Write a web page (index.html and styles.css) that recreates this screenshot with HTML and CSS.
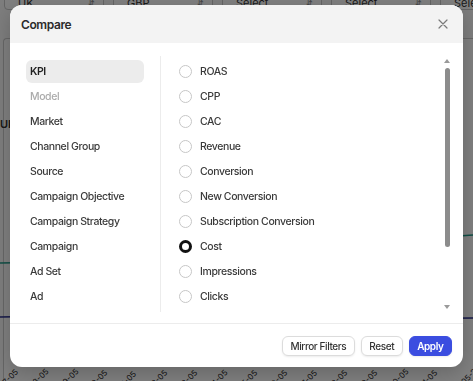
FILE: index.html
```html
<!DOCTYPE html>
<html lang="en">
<head>
  <meta charset="UTF-8" />
  <meta name="viewport" content="width=device-width, initial-scale=1.0" />
  <title>Compare</title>
  <link rel="stylesheet" href="styles.css">
</head>
<body>

  <!-- dashboard behind the dialog -->
  <div class="dash">
    <div class="filters">
      <div class="select">UK <span class="chev">&#8693;</span></div>
      <div class="select">GBP <span class="chev">&#8693;</span></div>
      <div class="select">Select <span class="chev">&#8693;</span></div>
      <div class="select">Select <span class="chev">&#8693;</span></div>
      <div class="select">Select <span class="chev">&#8693;</span></div>
    </div>

    <div class="card">
      <div class="card-label">UK</div>
      <svg class="chart" width="473" height="230" viewBox="0 0 473 230">
        <polyline points="0,132 120,130 240,124 360,112 473,104" fill="none" stroke="#1f9c8a" stroke-width="1.5" />
        <polyline points="0,186 120,184 240,186 360,188 473,187" fill="none" stroke="#2a2f8f" stroke-width="1.5" />
      </svg>
      <div class="axis">
        <span>07-05</span><span>08-05</span><span>09-05</span><span>10-05</span>
        <span>11-05</span><span>12-05</span><span>13-05</span><span>14-05</span>
        <span>15-05</span><span>16-05</span><span>17-05</span><span>18-05</span>
        <span>19-05</span><span>20-05</span><span>21-05</span><span>22-05-2024</span>
      </div>
    </div>
  </div>

  <div class="backdrop">
    <div class="modal">
      <div class="modal-head">
        <h2>Compare</h2>
        <button class="close" aria-label="Close">
          <svg width="10" height="10" viewBox="0 0 10 10">
            <path d="M1 1 L9 9 M9 1 L1 9" stroke="#7a7a7a" stroke-width="1.2" stroke-linecap="round" />
          </svg>
        </button>
      </div>

      <div class="modal-body">
        <ul class="nav">
          <li class="active">KPI</li>
          <li class="disabled">Model</li>
          <li>Market</li>
          <li>Channel Group</li>
          <li>Source</li>
          <li>Campaign Objective</li>
          <li>Campaign Strategy</li>
          <li>Campaign</li>
          <li>Ad Set</li>
          <li>Ad</li>
        </ul>

        <div class="options">
          <ul class="option-list">
            <li><span class="radio"></span>ROAS</li>
            <li><span class="radio"></span>CPP</li>
            <li><span class="radio"></span>CAC</li>
            <li><span class="radio"></span>Revenue</li>
            <li><span class="radio"></span>Conversion</li>
            <li><span class="radio"></span>New Conversion</li>
            <li><span class="radio"></span>Subscription Conversion</li>
            <li><span class="radio checked"></span>Cost</li>
            <li><span class="radio"></span>Impressions</li>
            <li><span class="radio"></span>Clicks</li>
          </ul>
          <div class="scrollbar">
            <span class="arrow up"></span>
            <span class="thumb"></span>
            <span class="arrow down"></span>
          </div>
        </div>
      </div>

      <div class="modal-foot">
        <button class="btn">Mirror Filters</button>
        <button class="btn">Reset</button>
        <button class="btn primary">Apply</button>
      </div>
    </div>
  </div>

</body>
</html>
```

FILE: styles.css
```css
body {
  margin: 0;
  padding: 0;
  font-family: Inter, "Noto Sans", sans-serif;
  color: #333;
  overflow: hidden;
}

/* dashboard underneath */
.dash {
  height: 381px;
  background: #fafafa;
  overflow: hidden;
}

.filters {
  display: flex;
  gap: 9px;
  margin-top: -14px;
  padding-left: 4px;
}

.select {
  flex: 0 0 100px;
  height: 24px;
  box-sizing: border-box;
  border: 1px solid #c9c9c9;
  border-radius: 4px;
  background: #fff;
  padding: 10px 8px 0 13px;
  font-size: 11px;
  display: flex;
  justify-content: space-between;
  align-items: center;
  color: #333;
}

.chev {
  font-size: 8px;
  color: #888;
}

.card {
  margin: 28px 0 0 3px;
  border-left: 1px solid #ccc;
  border-top: 1px solid #ccc;
  border-radius: 4px 0 0 0;
  height: 360px;
  background: #fff;
}

.card-label {
  margin: 78px 0 0 -4px;
  font-size: 11px;
  font-weight: 600;
  height: 14px;
}

.chart {
  display: block;
  margin-left: -4px;
}

.axis {
  display: flex;
  margin: 0 0 0 -8px;
}

.axis span {
  flex: 0 0 30px;
  font-size: 8px;
  color: #222;
  transform: rotate(-45deg);
  white-space: nowrap;
  margin-top: 10px;
}

/* dialog */
.backdrop {
  position: fixed;
  top: 0;
  left: 0;
  right: 0;
  bottom: 0;
  background: rgba(0, 0, 0, 0.5);
  display: flex;
  justify-content: center;
  align-items: flex-start;
  padding-top: 5px;
}

.modal {
  width: 453px;
  background: #fff;
  border-radius: 12px;
  overflow: hidden;
  box-shadow: 0 6px 20px rgba(0, 0, 0, 0.2);
}

.modal-head {
  height: 38px;
  background: #f3f3f3;
  display: flex;
  justify-content: space-between;
  align-items: center;
  padding: 0 12px 0 11px;
}

.modal-head h2 {
  margin: 0;
  font-size: 12px;
  font-weight: 600;
  letter-spacing: -0.4px;
  color: #2b2b2b;
}

.close {
  border: none;
  background: none;
  padding: 0;
  width: 16px;
  height: 16px;
  display: flex;
  align-items: center;
  justify-content: center;
  cursor: pointer;
}

.modal-body {
  display: flex;
  height: 280px;
  box-sizing: border-box;
  padding: 13px 0 11px 16px;
}

.nav {
  list-style: none;
  margin: 0;
  padding: 4px 16px 0 0;
  width: 118px;
  border-right: 1px solid #ececec;
  display: flex;
  flex-direction: column;
  gap: 2px;
}

.nav li {
  height: 23px;
  line-height: 23px;
  padding-left: 4px;
  border-radius: 6px;
  font-size: 10.5px;
  font-weight: 500;
  letter-spacing: -0.4px;
  color: #3a3a3a;
  white-space: nowrap;
}

.nav li.active {
  background: #ececec;
  font-weight: 600;
  color: #222;
}

.nav li.disabled {
  color: #ababab;
}

.options {
  flex: 1;
  display: flex;
  padding-left: 18px;
}

.option-list {
  flex: 1;
  list-style: none;
  margin: 0;
  padding: 4px 0 0 0;
  display: flex;
  flex-direction: column;
  gap: 2px;
}

.option-list li {
  height: 23px;
  display: flex;
  align-items: center;
  gap: 8px;
  font-size: 10.5px;
  font-weight: 500;
  letter-spacing: -0.4px;
  color: #3a3a3a;
  white-space: nowrap;
}

.radio {
  width: 13px;
  height: 13px;
  box-sizing: border-box;
  border: 1px solid #c6c6c6;
  border-radius: 50%;
  flex: 0 0 13px;
}

.radio.checked {
  border: 3.5px solid #111;
}

.scrollbar {
  width: 6px;
  margin-right: 13px;
  display: flex;
  flex-direction: column;
  align-items: center;
  padding: 3px 0 3px 0;
}

.arrow {
  width: 0;
  height: 0;
  border-left: 3px solid transparent;
  border-right: 3px solid transparent;
}

.arrow.up {
  border-bottom: 4px solid #9a9a9a;
}

.arrow.down {
  border-top: 4px solid #9a9a9a;
  margin-top: auto;
}

.thumb {
  width: 5px;
  height: 179px;
  margin-top: 5px;
  background: #8c8c8c;
  border-radius: 3px;
}

.modal-foot {
  border-top: 1px solid #ececec;
  height: 44px;
  box-sizing: border-box;
  display: flex;
  justify-content: flex-end;
  align-items: flex-start;
  gap: 6px;
  padding: 12px 11px 0 0;
}

.btn {
  height: 20px;
  padding: 0 7.5px;
  font-family: Inter, "Noto Sans", sans-serif;
  font-size: 10px;
  font-weight: 500;
  letter-spacing: -0.4px;
  color: #333;
  background: #fff;
  border: 1px solid #dcdcdc;
  border-radius: 6px;
  box-shadow: 0 1px 2px rgba(0, 0, 0, 0.08);
  cursor: pointer;
}

.btn.primary {
  background: #3b4de0;
  border-color: #3b4de0;
  color: #fff;
  font-weight: 600;
}
```
